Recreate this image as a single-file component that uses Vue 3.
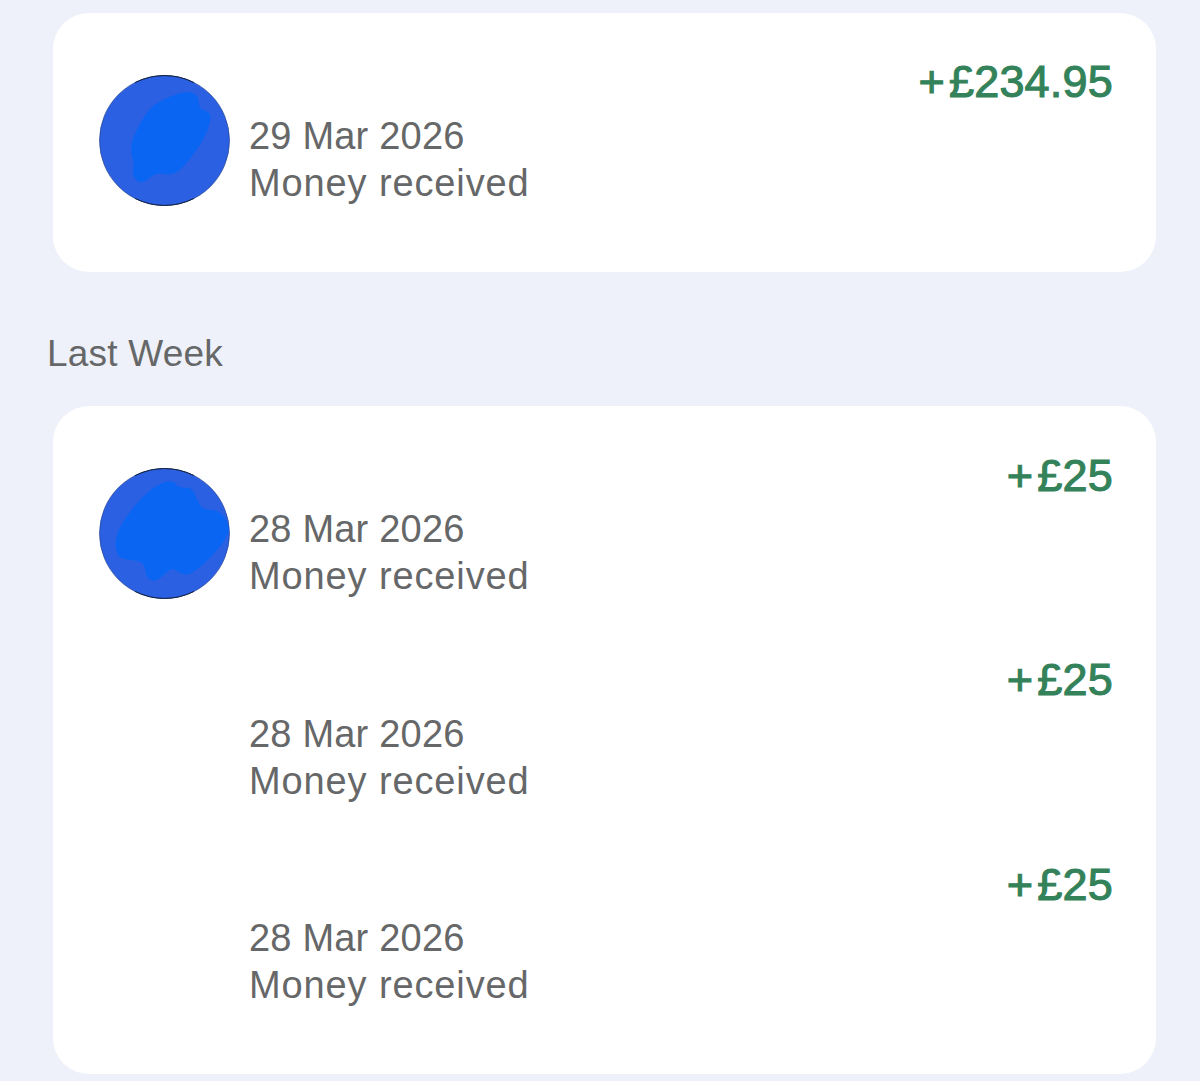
<script setup>
// Closed smooth outline through the midpoints of a hand-traced polygon,
// pushed out slightly so the curve reaches the traced extremes
function smooth(points, grow = 1.07) {
  const cx = points.reduce((s, p) => s + p[0], 0) / points.length
  const cy = points.reduce((s, p) => s + p[1], 0) / points.length
  const pts = points.map(p => [cx + (p[0] - cx) * grow, cy + (p[1] - cy) * grow])
  const mid = (a, b) => [(a[0] + b[0]) / 2, (a[1] + b[1]) / 2]
  const start = mid(pts[pts.length - 1], pts[0])
  let d = `M${start[0]} ${start[1]}`
  pts.forEach((p, i) => {
    const m = mid(p, pts[(i + 1) % pts.length])
    d += `Q${p[0]} ${p[1]} ${m[0]} ${m[1]}`
  })
  return d + 'Z'
}

const recent = {
  date: '29 Mar 2026', amount: '£234.95',
  blob: smooth([[88, 19], [98, 24], [98, 36], [110, 39], [107, 55], [98, 72], [81, 93], [71, 98], [58, 95], [44, 107], [35, 98], [38, 88], [33, 72], [41, 52], [54, 32], [74, 23]])
}
const week = [
  { date: '28 Mar 2026', amount: '£25', blob: smooth([[71, 12], [81, 22], [93, 20], [101, 43], [118, 42], [129, 57], [127, 69], [111, 89], [91, 106], [81, 105], [73, 98], [58, 113], [48, 109], [46, 93], [31, 91], [20, 89], [17, 72], [26, 52], [48, 25]], 1.03) },
  { date: '28 Mar 2026', amount: '£25' },
  { date: '28 Mar 2026', amount: '£25' }
]
const rows = [[recent], week]
</script>

<template>
  <main class="page">
    <template v-for="(group, g) in rows" :key="g">
      <h2 v-if="g === 1" class="heading">Last Week</h2>
      <section class="card" :class="{ 'card-week': g === 1 }">
        <div v-for="(item, i) in group" :key="i" class="row">
          <svg class="avatar" viewBox="0 0 131 131" aria-hidden="true">
            <template v-if="item.blob">
              <circle cx="65.5" cy="65.5" r="65" fill="#2c60e2" stroke="#24438f" stroke-width="0.7" />
              <path :d="item.blob" fill="#0a66f2" />
              <path d="M36 7.6A65 65 0 0 1 95 7.6M36 123.4A65 65 0 0 0 95 123.4" fill="none" stroke="#10203f" stroke-width="1" />
            </template>
          </svg>
          <div class="text">
            <div class="date">{{ item.date }}</div>
            <div class="label">Money received</div>
          </div>
          <div class="amount"><span class="sign">+</span>{{ item.amount }}</div>
        </div>
      </section>
    </template>
  </main>
</template>

<style scoped>
.page {
  box-sizing: border-box;
  height: 1081px;
  padding: 13px 44px 0 53px;
  overflow: hidden;
  font-family: "Liberation Sans", Arial, sans-serif;
}
.card {
  display: flex;
  flex-direction: column;
  gap: 56px;
  padding: 45px 43px 65px 46px;
  background: #fff;
  border-radius: 36px;
}
.card-week {
  padding-top: 46px;
}
.row {
  display: flex;
  align-items: flex-end;
  gap: 20px;
  height: 148.5px;
}
.avatar {
  flex: none;
  width: 131px;
  height: 131px;
  margin-bottom: 1px;
}
.text {
  flex: 1;
  margin-left: -1px;
  font-size: 38px;
  line-height: 47px;
  color: #666768;
}
.date {
  letter-spacing: 0.2px;
}
.label {
  letter-spacing: 0.88px;
}
.amount {
  align-self: flex-start;
  font-size: 45px;
  line-height: 47px;
  letter-spacing: 0.2px;
  color: #34825a;
  -webkit-text-stroke: 1.1px #34825a;
}
.sign {
  margin-right: 4px;
}
.heading {
  margin: 58px 0 29px -6px;
  font-size: 37px;
  font-weight: 400;
  line-height: 47px;
  letter-spacing: 0.2px;
  color: #666768;
}
</style>

<style>
body {
  background: #eef1f9;
}
</style>
